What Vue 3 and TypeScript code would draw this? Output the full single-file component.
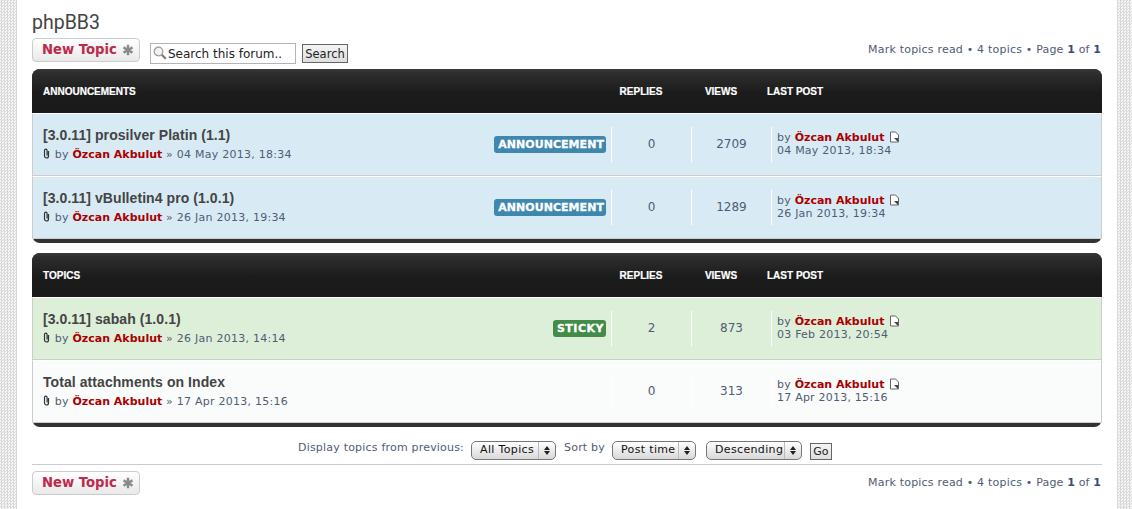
<template>
  <div class="page">
    <div class="wrap">
      <h2 class="forum-title">phpBB3</h2>

      <div class="action-bar top">
        <a class="post-btn">New Topic <svg class="star" viewBox="0 0 12 12"><path d="M6 .8v10.400M1.500 3.400l9 5.200M1.500 8.600l9-5.200" /></svg></a>
        <div class="search-box">
          <svg class="lens" viewBox="0 0 14 14"><circle cx="5.500" cy="5.500" r="4.300" /><path class="handle" d="M8.800 8.800l4 4" /></svg>
          <input class="search-input" value="Search this forum.." />
          <button class="btn search-btn">Search</button>
        </div>
        <div class="pagination">Mark topics read • 4 topics • Page <b>1</b> of <b>1</b></div>
      </div>

      <section v-for="block in blocks" :key="block.title" class="forumbg">
        <div class="head">
          <span class="head-title">{{ block.title }}</span>
          <span class="head-col">REPLIES</span>
          <span class="head-col">VIEWS</span>
          <span class="head-last">LAST POST</span>
        </div>
        <div v-for="topic in block.topics" :key="topic.title" :class="['row', topic.kind]">
          <div class="main">
            <div class="info">
              <div class="topic-title">{{ topic.title }}</div>
              <div class="meta">
                <svg class="clip" viewBox="0 0 7 11"><path d="M5.500 3v5a2 2 0 0 1-4 0V2.500a1.300 1.300 0 0 1 2.600 0V7.500" /></svg>
                by <b class="author">Özcan Akbulut</b> » {{ topic.date }}
              </div>
            </div>
            <span v-if="topic.badge" :class="['badge', topic.kind]">{{ topic.badge }}</span>
          </div>
          <div class="stat">{{ topic.replies }}</div>
          <div class="stat">{{ topic.views }}</div>
          <div class="last">
            <div>by <b class="author">Özcan Akbulut</b>
              <svg class="latest" viewBox="0 0 11 12"><path class="sheet" d="M1.500 1h5l3 3v7h-8z" /><path class="arrow" d="M5 7l4 0 0 4-1.500-1.500z" /></svg>
            </div>
            <div>{{ topic.lastDate ?? topic.date }}</div>
          </div>
        </div>
      </section>

      <div class="sort-bar">
        <span class="sort-label">Display topics from previous:</span>
        <div class="select s1">All Topics<i class="arrows" /></div>
        <span class="sort-label by">Sort by</span>
        <div class="select s2">Post time<i class="arrows" /></div>
        <div class="select s3">Descending<i class="arrows" /></div>
        <button class="btn go-btn">Go</button>
      </div>

      <div class="action-bar bottom">
        <a class="post-btn">New Topic <svg class="star" viewBox="0 0 12 12"><path d="M6 .8v10.400M1.500 3.400l9 5.200M1.500 8.600l9-5.200" /></svg></a>
        <div class="pagination">Mark topics read • 4 topics • Page <b>1</b> of <b>1</b></div>
      </div>
    </div>
  </div>
</template>

<script setup lang="ts">
interface Topic {
  title: string;
  date: string;
  lastDate?: string;
  replies: number;
  views: number;
  kind: 'announce' | 'sticky' | 'normal';
  badge?: string;
}

const blocks: { title: string; topics: Topic[] }[] = [
  {
    title: 'ANNOUNCEMENTS',
    topics: [
      { title: '[3.0.11] prosilver Platin (1.1)', date: '04 May 2013, 18:34', replies: 0, views: 2709, kind: 'announce', badge: 'ANNOUNCEMENT' },
      { title: '[3.0.11] vBulletin4 pro (1.0.1)', date: '26 Jan 2013, 19:34', replies: 0, views: 1289, kind: 'announce', badge: 'ANNOUNCEMENT' },
    ],
  },
  {
    title: 'TOPICS',
    topics: [
      { title: '[3.0.11] sabah (1.0.1)', date: '26 Jan 2013, 14:14', lastDate: '03 Feb 2013, 20:54', replies: 2, views: 873, kind: 'sticky', badge: 'STICKY' },
      { title: 'Total attachments on Index', date: '17 Apr 2013, 15:16', replies: 0, views: 313, kind: 'normal' },
    ],
  },
];
</script>

<style>
html,
body {
  margin: 0;
  background: #fff;
}
</style>

<style scoped>
.page {
  height: 509px;
  overflow: hidden;
  box-sizing: border-box;
  padding: 0 15px 0 17px;
  background: repeating-conic-gradient(#d9d9d9 0 25%, #f6f6f6 0 50%) 0 0 / 3px 3px;
  font-family: "DejaVu Sans", sans-serif;
  font-size: 11px;
  color: #505c75;
}

.wrap {
  height: 100%;
  box-sizing: border-box;
  padding: 0 15px;
  background: #fff;
}

.forum-title {
  margin: 0;
  padding-top: 10px;
  height: 28px;
  font: 400 19.500px/26px Roboto, sans-serif;
  color: #444;
}

.action-bar {
  display: flex;
  align-items: flex-start;
}

.action-bar.top {
  height: 31px;
}

.action-bar.bottom {
  margin-top: 6px;
  height: 24px;
}

.post-btn {
  display: flex;
  align-items: center;
  gap: 5px;
  box-sizing: border-box;
  width: 108px;
  height: 24px;
  padding: 0 0 2px 9px;
  border: 1px solid #ccc;
  border-radius: 4px;
  background: linear-gradient(#fff, #e9e9e9);
  font-weight: 700;
  font-size: 13.2px;
  color: #bc2a4d;
}

.star {
  width: 12px;
  height: 12px;
  margin-top: 2px;
  fill: none;
  stroke: #8a8a8a;
  stroke-width: 2.400;
}

.search-box {
  display: flex;
  align-items: center;
  position: relative;
  margin: 5px 0 0 10px;
}

.lens {
  position: absolute;
  left: 3px;
  top: 3px;
  width: 14px;
  height: 14px;
  fill: #f2f2f2;
  stroke: #999;
  stroke-width: 1.200;
}

.lens .handle {
  stroke: #777;
  stroke-width: 2;
}

.search-input {
  box-sizing: border-box;
  width: 146px;
  height: 21px;
  padding: 0 0 0 17px;
  border: 1px solid #b4b4b4;
  background: #fff;
  font: 12px "DejaVu Sans", sans-serif;
  color: #222;
  outline: none;
}

.btn {
  box-sizing: border-box;
  border: 1px solid #666;
  border-radius: 0;
  padding: 0;
  background: linear-gradient(#f4f4f4, #dedede);
  font-family: "DejaVu Sans", sans-serif;
  font-size: 11.500px;
  color: #222;
}

.search-btn {
  width: 46px;
  height: 19px;
  margin-left: 6px;
}

.pagination {
  margin: 5px 1px 0 auto;
  letter-spacing: 0.2px;
}

.pagination b {
  color: #35507a;
  letter-spacing: 0;
}

.forumbg {
  margin-bottom: 10px;
  background: #333;
  border-radius: 8px;
  padding-bottom: 4px;
  overflow: hidden;
}

.head {
  display: flex;
  align-items: center;
  height: 44px;
  padding-left: 11px;
  background: linear-gradient(#3a3a3a 0, #2f2f2f 3px, #1b1b1b 55%, #1a1a1a 100%);
  font: 700 10px "Liberation Sans", sans-serif;
  color: #fff;
  -webkit-text-stroke: 0.2px #fff;
}

.head-title {
  flex: 1;
}

.head-col {
  width: 80px;
  box-sizing: border-box;
  padding-right: 12px;
  text-align: center;
}

.head-last {
  width: 335px;
}

.row {
  display: flex;
  align-items: center;
  box-sizing: border-box;
  height: 63px;
  border-top: 1px solid #fff;
  border-bottom: 1px solid #ccc;
  border-left: 1px solid #ccc;
  border-right: 1px solid #ccc;
}

.row.announce {
  background: #d8ebf5;
}

.row.sticky {
  background: #deefd9;
}

.row.normal {
  background: #fafcfb;
}

.main {
  flex: 1;
  display: flex;
  align-items: center;
  justify-content: space-between;
  min-width: 0;
  padding: 0 5px 2px 10px;
}

.topic-title {
  font: 700 14px/18px "Liberation Sans", sans-serif;
  letter-spacing: 0.07px;
  color: #444;
}

.meta {
  margin-top: 3px;
  line-height: 15px;
  font-size: 11px;
  letter-spacing: 0.25px;
}

.clip {
  width: 7px;
  height: 11px;
  margin-right: 1px;
  vertical-align: -1px;
  fill: none;
  stroke: #333;
  stroke-width: 1.200;
}

.author {
  letter-spacing: 0;
  color: #aa0000;
}

.badge {
  display: block;
  margin-top: 2px;
  padding: 0 2px 0 4px;
  height: 17px;
  border-radius: 3px;
  font: 700 11px/17px "DejaVu Sans", sans-serif;
  color: #fff;
  -webkit-text-stroke: 0.3px #fff;
}

.badge.announce {
  background: #3e88b0;
  letter-spacing: 0.05px;
}

.badge.sticky {
  background: #438b48;
  letter-spacing: 0.5px;
}

.stat {
  width: 80px;
  height: 35px;
  line-height: 35px;
  box-sizing: border-box;
  border-left: 1px solid #fff;
  text-align: center;
  font-size: 12px;
}

.last {
  width: 330px;
  height: 35px;
  box-sizing: border-box;
  border-left: 1px solid #fff;
  padding: 4px 0 0 5px;
  line-height: 13px;
  font-size: 11px;
  letter-spacing: 0.22px;
}

.latest {
  width: 11px;
  height: 12px;
  margin-left: 5px;
  vertical-align: -2px;
}

.sheet {
  fill: #fff;
  stroke: #666;
}

.arrow {
  fill: #444;
}

.sort-bar {
  display: flex;
  align-items: center;
  height: 27px;
  padding-left: 266px;
  border-bottom: 1px solid #ccc;
}

.sort-label {
  margin-top: -6px;
  letter-spacing: 0.2px;
}

.sort-label.by {
  margin-left: 8px;
}

.select {
  position: relative;
  box-sizing: border-box;
  height: 19px;
  padding-left: 8px;
  border: 1px solid #777;
  border-radius: 5px;
  background: linear-gradient(#fff, #d8d8d8);
  font-size: 11px;
  line-height: 15px;
  letter-spacing: 0.35px;
  color: #111;
}

.s1 {
  width: 85px;
  margin-left: 7px;
}

.s2 {
  width: 84px;
  margin-left: 7px;
}

.s3 {
  width: 96px;
  margin-left: 10px;
}

.arrows {
  position: absolute;
  top: 0;
  right: 0;
  bottom: 0;
  width: 16px;
  border-left: 1px solid #bbb;
}

.arrows::before,
.arrows::after {
  content: "";
  position: absolute;
  left: 5px;
  border-left: 3px solid transparent;
  border-right: 3px solid transparent;
}

.arrows::before {
  top: 4px;
  border-bottom: 4px solid #222;
}

.arrows::after {
  bottom: 4px;
  border-top: 4px solid #222;
}

.go-btn {
  width: 22px;
  height: 17px;
  margin: 2px 0 0 8px;
  font-size: 11px;
}
</style>
